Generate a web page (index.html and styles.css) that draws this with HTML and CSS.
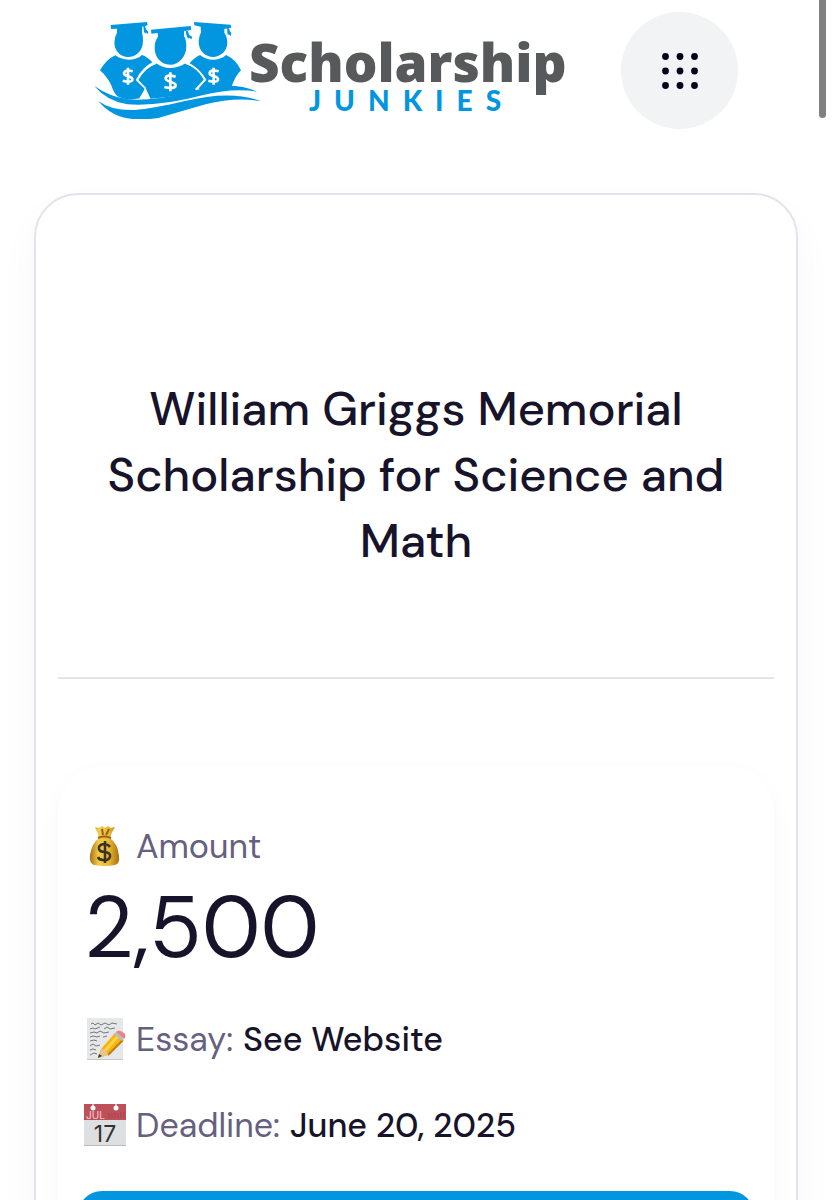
FILE: index.html
```html
<!DOCTYPE html>
<html lang="en">
<head>
    <meta charset="UTF-8">
    <meta name="viewport" content="width=device-width, initial-scale=1.0">
    <title>William Griggs Memorial Scholarship for Science and Math</title>
    <link rel="stylesheet" href="styles.css">
</head>
<body>
    <header class="header">
        <a class="logo" href="#">
            <svg class="logo-mark" viewBox="12 36 501 297" aria-hidden="true">
                <g fill="#0396e0">
                    <!-- left graduate -->
                    <path d="M62 48L171 39L173 49L157 53L156 70Q159 82 159 97Q159 112 152 123Q138 144 116 144Q93 144 80 125Q73 115 73 101Q73 84 81 72V59L63 60Z"/>
                    <path d="M160 52L165 50L168 61L175 68L173 76L168 70L167 74L162 69Z"/>
                    <path d="M76 139Q96 153 119 152Q143 151 156 138Q172 143 187 160Q156 176 138 212L166 236Q160 250 150 268Q109 277 82 262Q72 252 63 227Q51 203 30 184Q49 151 76 139Z"/>
                    <!-- right graduate -->
                    <path d="M312 39L422 47L424 56L403 60V71Q412 84 412 102Q411 119 401 130Q387 144 368 144Q347 143 335 127Q326 115 326 97Q327 81 333 70L332 53L313 49Z"/>
                    <path d="M411 58L416 57L420 67L424 73L422 82L417 76L413 78Z"/>
                    <path d="M330 138Q349 153 372 152Q394 151 408 138Q436 149 453 184Q437 199 425 232Q379 233 338 246L325 238L349 212Q328 179 299 163Q312 146 330 138Z"/>
                    <!-- middle graduate -->
                    <path d="M183 62L302 51L304 62L282 67V81Q289 92 289 112Q289 134 276 149Q261 167 240 167Q218 167 205 150Q194 136 194 116Q194 96 204 83L203 72L184 74Z"/>
                    <path d="M287 67L293 65L298 78L307 84L304 91L298 86L295 89L290 81Z"/>
                    <path d="M199 163Q218 178 243 177Q268 176 286 163Q318 172 342 212L315 240L321 247Q261 264 181 269L168 240L145 213Q167 174 199 163Z"/>
                    <!-- waves -->
                    <path d="M12 230Q57 262 113 271Q184 277 290 251Q420 211 501 248Q430 236 340 258Q209 293 112 286Q51 276 12 230Z"/>
                    <path d="M25 276Q63 305 133 303Q189 299 285 276Q424 242 513 277Q438 262 347 286Q257 312 205 327L180 330H128Q65 325 25 276Z"/>
                </g>
                <path d="M166 238L147 269L181 269Z" fill="#fff"/>
                <path d="M199 162Q163 174 141 213L167 239M286 162Q324 174 345 212L319 242" fill="none" stroke="#fff" stroke-width="5"/>
                <g fill="none" stroke="#fff" stroke-width="8">
                    <path d="M128 187Q105 180 102 192Q101 198 113 201Q129 205 127 213Q123 222 98 215M114 176V227"/>
                    <path d="M386 187Q361 180 359 192Q358 198 370 201Q386 205 384 213Q380 222 355 215M371 176V227"/>
                    <path d="M257 203Q230 195 227 207Q226 214 241 218Q259 223 257 231Q251 241 223 234M241 190V247"/>
                </g>
            </svg>
            <span class="wordmark">
                <span class="wordmark-main">Scholarship</span>
                <span class="wordmark-sub">JUNKIES</span>
            </span>
        </a>
        <button class="menu-button" type="button" aria-label="Menu">
            <svg class="menu-dots" viewBox="0 0 36 36" aria-hidden="true">
                <circle cx="3.500" cy="3.500" r="3.400"/><circle cx="18" cy="3.500" r="3.400"/><circle cx="32.500" cy="3.500" r="3.400"/>
                <circle cx="3.500" cy="18" r="3.400"/><circle cx="18" cy="18" r="3.400"/><circle cx="32.500" cy="18" r="3.400"/>
                <circle cx="3.500" cy="32.500" r="3.400"/><circle cx="18" cy="32.500" r="3.400"/><circle cx="32.500" cy="32.500" r="3.400"/>
            </svg>
        </button>
    </header>

    <main class="card">
        <h1 class="title">William Griggs Memorial Scholarship for Science and Math</h1>
        <section class="details">
            <div class="row">
                <svg class="icon" viewBox="0 0 42 42" aria-hidden="true">
                    <defs>
                        <linearGradient id="gold" x2="1">
                            <stop offset="0" stop-color="#a96f16"/>
                            <stop offset=".3" stop-color="#f4cb48"/>
                            <stop offset=".65" stop-color="#e9b92f"/>
                            <stop offset="1" stop-color="#a7700f"/>
                        </linearGradient>
                    </defs>
                    <path d="M15 13Q14 7 11 2L15 3L18 1L21 3L24 1L27 3L31 2Q27 8 26 13Q34 19 35 31Q36 39 31 40Q21 42 10 40Q5 38 6 30Q8 18 15 13Z" fill="url(#gold)"/>
                    <path d="M14 13Q20 10 27 13M18 4L19 10M25 4L22 10" fill="none" stroke="#96601d" stroke-width="2"/>
                    <path d="M26 22Q24 19 20 19Q14 20 15 24Q16 27 21 27Q27 28 26 32Q24 36 19 35Q15 35 14 32M21 16V38" fill="none" stroke="#3b3222" stroke-width="2.500"/>
                </svg>
                <span class="label">Amount</span>
            </div>
            <div class="amount">2,500</div>
            <div class="row">
                <svg class="icon" viewBox="0 0 42 42" aria-hidden="true">
                    <path d="M3 0H39V42H3Z" fill="#e6e7e8"/>
                    <path d="M3 41.500H39" stroke="#c7c8ca"/>
                    <path d="M7 6l2-1 2 2 3-2 3 2 4-2 4 2 3-2 5 1M6 11l3-1 2 1 5-2M20 11l3-2 3 2 5-1M6 15l4-1 3 1 3-2 4 2 5-1M6 19l3-1 4 1 3-1M19 19l4-1M6 23l4-1 3 1M6 28l3-2 3 2 4-1M6 32l3-1 3 1M6 37l4-2 3 1" fill="none" stroke="#777" stroke-width="1"/>
                    <path d="M14 40L17 31L31 15L39 22L24 37Z" fill="#f6b50f"/>
                    <path d="M20 34L34 18" stroke="#ffd34a" stroke-width="3"/>
                    <path d="M24 37L39 22" stroke="#bd7d13" stroke-width="2"/>
                    <path d="M14 40L17 31Q22 30 24 37Z" fill="#e8c38d"/>
                    <path d="M14 40L15 36L18 38Z" fill="#333"/>
                    <path d="M30 16L32 14L40 21L38 23Z" fill="#b9bdc1"/>
                    <path d="M32 14Q35 11 40 15Q43 18 40 21Z" fill="#e78490"/>
                </svg>
                <span class="label">Essay:</span>
                <span class="value">See Website</span>
            </div>
            <div class="row">
                <svg class="icon" viewBox="0 0 42 42" aria-hidden="true">
                    <path d="M0 0H42V42H0Z" fill="#dedfe0"/>
                    <path d="M0 0H42V16H0Z" fill="#bd5058"/>
                    <path d="M0 41.500H42" stroke="#bbb"/>
                    <path d="M9 0V3M32 0V3" stroke="#fff"/>
                    <circle cx="9" cy="4" r="2.500" fill="#fff"/>
                    <circle cx="32" cy="4" r="2.500" fill="#fff"/>
                    <path d="M25 9V14M28 9V14M31 8V14M34 9V14M37 8V14M40 8V14" stroke="#a3454d"/>
                    <text class="icon-month" x="2" y="15">JUL</text>
                    <text class="icon-day" x="21" y="38">17</text>
                </svg>
                <span class="label">Deadline:</span>
                <span class="value">June 20, 2025</span>
            </div>
            <a class="apply" href="#" aria-label="Apply"></a>
        </section>
    </main>
    <div class="scroll-thumb"></div>
</body>
</html>
```

FILE: styles.css
```css
* {
    box-sizing: border-box;
}
body {
    margin: 0;
    height: 100vh;
    overflow: hidden;
    background: #fff;
    color: #17132a;
    font-family: 'DM Sans', 'Inter', sans-serif;
}
.header {
    display: flex;
    align-items: center;
    justify-content: space-between;
    padding: 12px 94px;
}
.logo {
    display: flex;
    align-items: flex-start;
    text-decoration: none;
}
.logo-mark {
    width: 167px;
    height: 99px;
}
.wordmark {
    display: flex;
    flex-direction: column;
    margin-left: -12px;
    padding-top: 14px;
    font-family: 'Open Sans', sans-serif;
}
.wordmark-main {
    color: #58595b;
    font-size: 53px;
    font-weight: 800;
    line-height: 54px;
}
.wordmark-sub {
    padding-left: 60px;
    color: #0396e0;
    font-family: 'Lato', sans-serif;
    font-size: 28px;
    font-weight: 900;
    line-height: 22px;
    letter-spacing: 13px;
}
.menu-button {
    display: flex;
    align-items: center;
    justify-content: center;
    width: 117px;
    height: 117px;
    padding: 0;
    border: none;
    border-radius: 50%;
    background: #f1f3f5;
    cursor: pointer;
}
.menu-dots {
    width: 36px;
    height: 36px;
    fill: #03041a;
}
.card {
    margin: 52px 34px 0;
    padding: 0 22px;
    border: 2px solid #e2e2ec;
    border-radius: 44px;
    box-shadow: 0 20px 40px rgba(60, 60, 140, 0.04);
}
.title {
    margin: 0 0 88px;
    padding: 181px 40px 103px;
    border-bottom: 2px solid #e4e5e9;
    font-size: 47px;
    font-weight: 500;
    line-height: 66px;
    text-align: center;
}
.details {
    padding: 54px 26px 40px;
    border-radius: 44px;
    box-shadow: 0 8px 24px rgba(60, 60, 140, 0.03);
}
.row {
    display: flex;
    align-items: center;
    gap: 10px;
    height: 50px;
    margin-bottom: 36px;
    font-size: 34px;
}
.icon {
    width: 42px;
    height: 42px;
    overflow: visible;
}
.label {
    color: #656080;
}
.value {
    font-weight: 500;
}
.amount {
    margin: -32px 0 33px;
    font-size: 86px;
    line-height: 106px;
}
.apply {
    display: block;
    height: 90px;
    margin: 41px -6px 0;
    border-radius: 24px;
    background: #0396e0;
}
.icon-month {
    fill: #f3d3d5;
    font-family: 'Inter', sans-serif;
    font-size: 10px;
}
.icon-day {
    fill: #333;
    font-family: 'Inter', sans-serif;
    font-size: 23px;
    text-anchor: middle;
}
/* overlay scrollbar */
.scroll-thumb {
    position: fixed;
    top: -10px;
    right: 6px;
    width: 7px;
    height: 128px;
    border-radius: 4px;
    background: #808080;
}
```
